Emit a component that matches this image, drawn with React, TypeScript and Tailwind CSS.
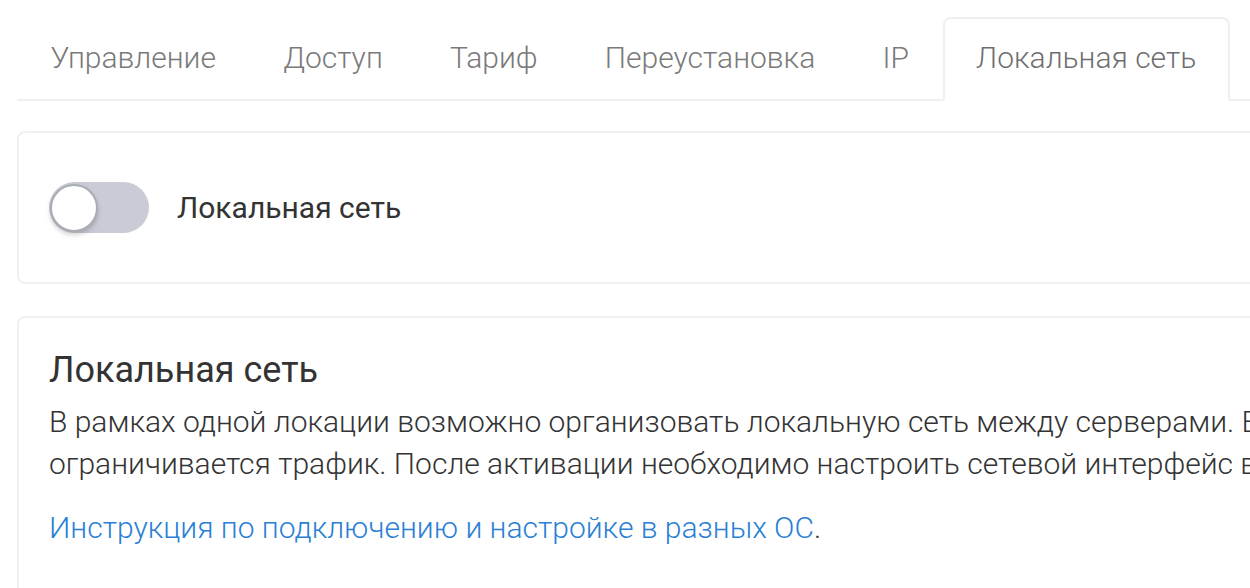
import React from 'react'

const tabs = ['Управление', 'Доступ', 'Тариф', 'Переустановка', 'IP', 'Локальная сеть']

const Toggle = () => (
  <div className="relative h-[51px] w-[100px] shrink-0 rounded-full bg-[#c9ccd5]">
    <div className="absolute left-[1px] top-[2px] h-[48px] w-[48px] rounded-full border-2 border-[#a9acb3] bg-white shadow-[0_3px_5px_rgba(0,0,0,0.18)]" />
  </div>
)

const App = () => {
  const active = 'Локальная сеть'

  return (
    <div className="h-[588px] w-[1250px] overflow-hidden bg-white font-['Roboto',sans-serif]">
      <div className="w-[1800px] pl-[17px] pt-[17px]">
        <div className="flex border-b-2 border-[#f0f0f0]">
          {tabs.map((tab) => (
            <div
              key={tab}
              className={
                tab === active
                  ? '-mb-[2px] rounded-t-lg border-2 border-[#efefef] border-b-white bg-white px-[31.6px] pt-[19px] pb-[21px] text-[30px] leading-[40px] font-light text-[#6f6f6f]'
                  : 'border-2 border-transparent px-[31.6px] pt-[19px] pb-[19px] text-[30px] leading-[40px] font-light text-[#7a7a7a]'
              }
            >
              {tab}
            </div>
          ))}
        </div>

        <div className="mt-[30px] flex h-[153px] items-center rounded-lg border-2 border-[#f0f0f0] px-[30px]">
          <Toggle />
          <span className="ml-[28px] text-[30px] text-[#333]">Локальная сеть</span>
        </div>

        <div className="mt-[32px] rounded-lg border-2 border-[#f0f0f0] px-[30px] pt-[28px] pb-16">
          <h2 className="text-[36px] leading-[48px] text-[#333]">Локальная сеть</h2>
          <p className="mt-[7px] text-[30px] leading-[42px] font-light text-[#333]">
            В рамках одной локации возможно организовать локальную сеть между серверами. В локальной сети не
            <br />
            ограничивается трафик. После активации необходимо настроить сетевой интерфейс в операционной системе.
          </p>
          <p className="mt-[22px] text-[30px] leading-[42px] font-light text-[#333]">
            <a className="text-[#2a7fd5]">Инструкция по подключению и настройке в разных ОС</a>.
          </p>
        </div>
      </div>
    </div>
  )
}

export default App
